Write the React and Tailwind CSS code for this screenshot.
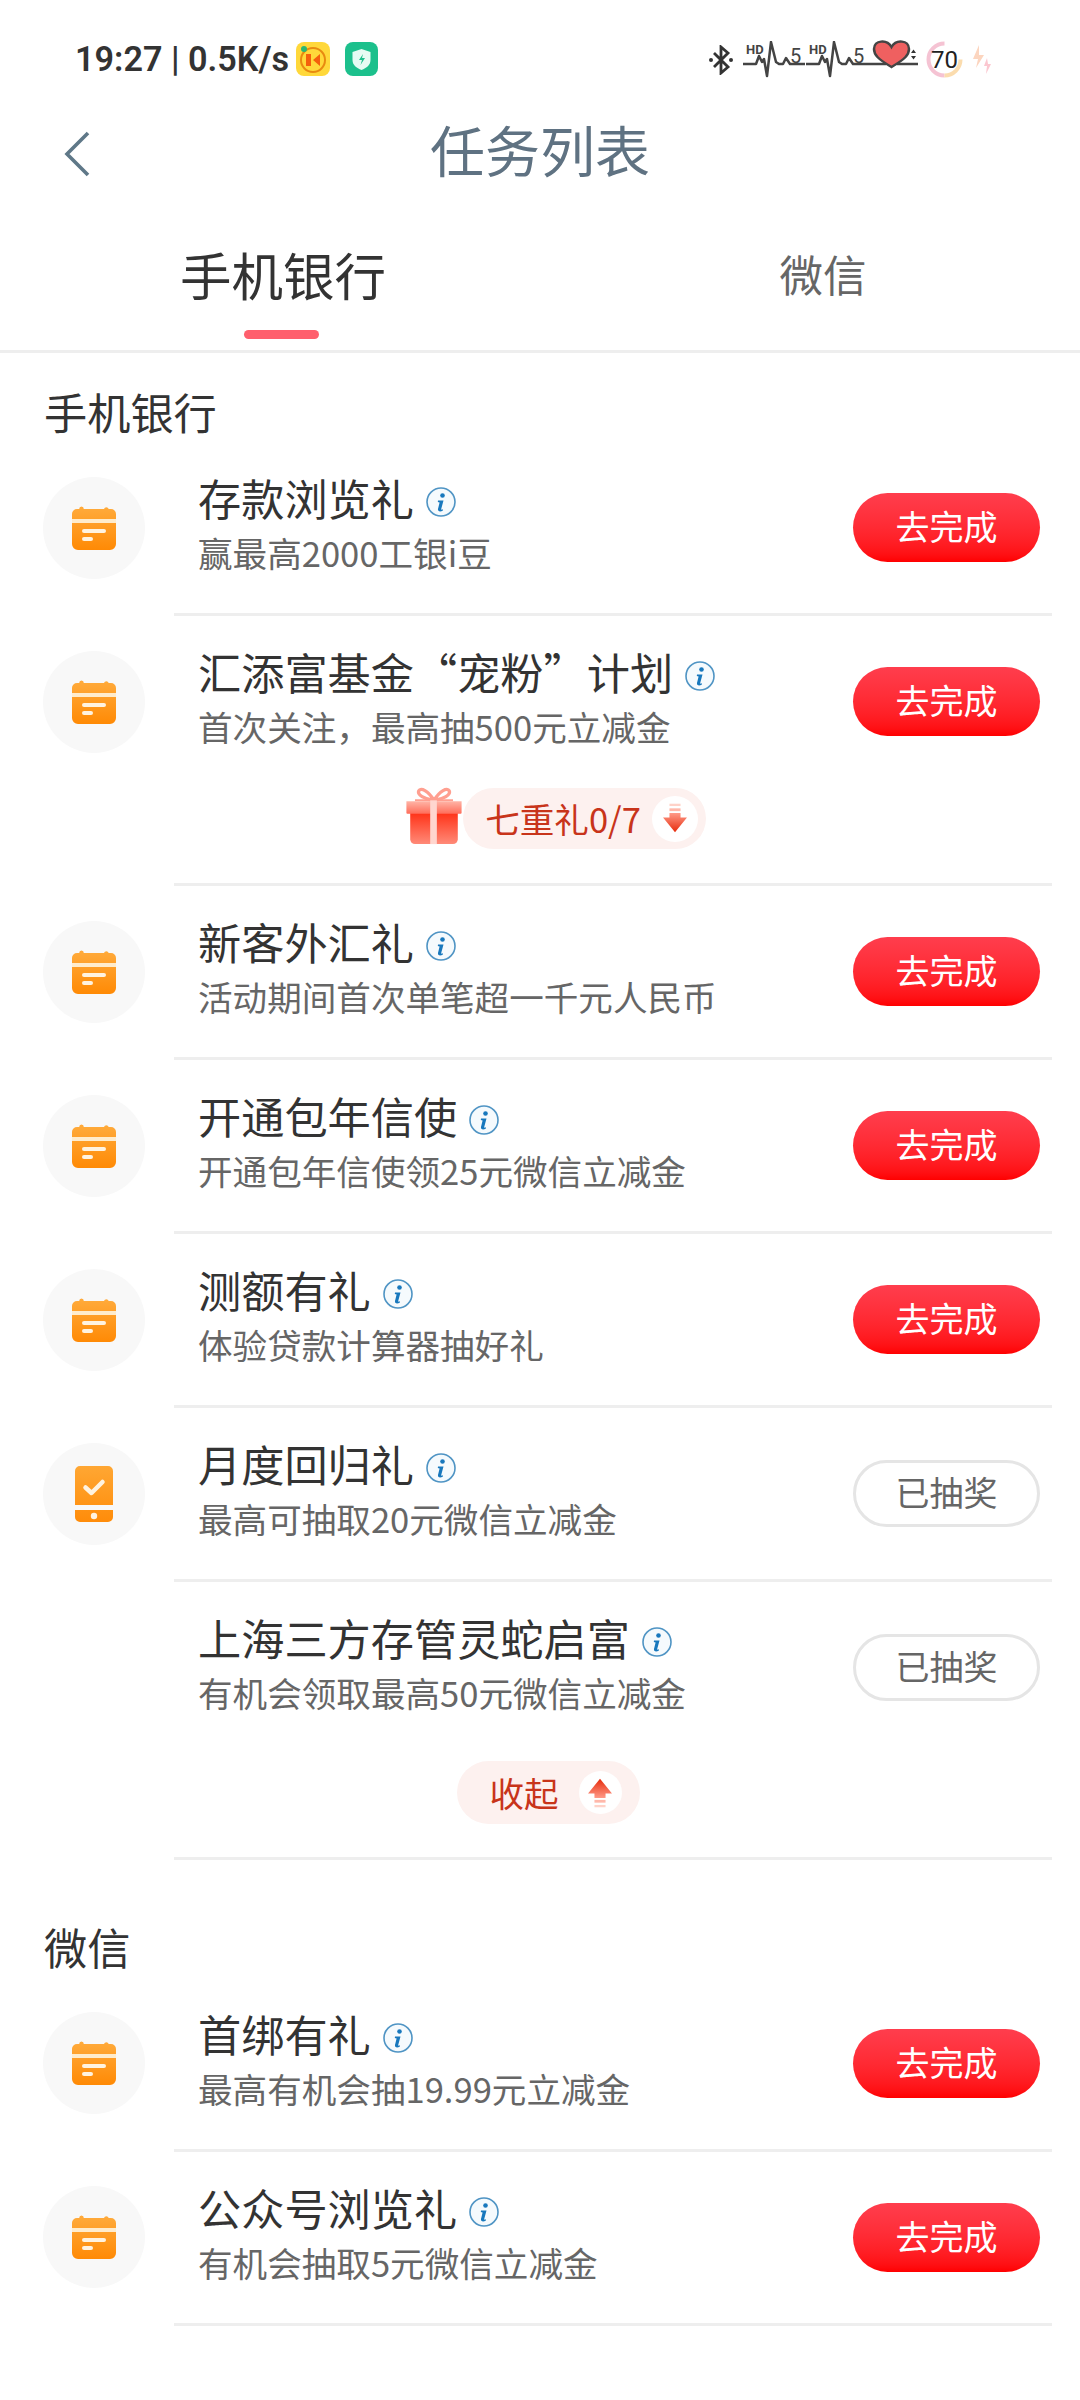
function CalIcon({ id }) {
  return (
    <svg width="46" height="46" viewBox="0 0 46 46">
      <defs>
        <linearGradient id={id} x1="0" y1="0" x2="0" y2="1">
          <stop offset="0" stopColor="#ffab3c" />
          <stop offset="1" stopColor="#ff8a05" />
        </linearGradient>
      </defs>
      <path fill={`url(#${id})`} d="M10.500 1.500a2.500 2.500 0 0 1 2.300 2.500H33a2.500 2.500 0 0 1 4.700 0H40a5 5 0 0 1 5 5V39a6 6 0 0 1-6 6H7a6 6 0 0 1-6-6V9a5 5 0 0 1 5-5h2.200a2.500 2.500 0 0 1 2.300-2.500z" />
      <rect x="1" y="14" width="44" height="4" fill="#ffeccc" />
      <rect x="11" y="24" width="24" height="4" rx="2" fill="#fff3e0" />
      <rect x="11" y="32" width="11" height="4" rx="2" fill="#fff3e0" />
    </svg>
  );
}
function PhoneIcon() {
  return (
    <svg width="38" height="56" viewBox="0 0 38 56">
      <defs>
        <linearGradient id="ph" x1="0" y1="0" x2="0" y2="1">
          <stop offset="0" stopColor="#ffa733" />
          <stop offset="1" stopColor="#ff8c0a" />
        </linearGradient>
      </defs>
      <path fill="url(#ph)" d="M5 0h28a5 5 0 0 1 5 5v34H0V5a5 5 0 0 1 5-5zM0 44h38v7a5 5 0 0 1-5 5H5a5 5 0 0 1-5-5z" />
      <path d="M10.500 21.500l6 5.500 11-11" fill="none" stroke="#fff3e0" strokeWidth="4.500" strokeLinecap="round" strokeLinejoin="round" />
      <circle cx="19" cy="50" r="3.200" fill="#fff3e0" />
    </svg>
  );
}
function Info() {
  return (
    <svg width="30" height="30" viewBox="0 0 30 30" className="mt-[10px] shrink-0">
      <circle cx="15" cy="15" r="14" fill="#f5fafd" stroke="#4f94c4" strokeWidth="1.600" />
      <circle cx="16.500" cy="8.500" r="2.300" fill="#1878bd" />
      <path d="M12 13.500h5.500l-2.300 8.500c-.2.800.5 1 1.800.300l-.3 1.500c-2.800 1.200-5.200.6-4.700-1.800l1.600-6.500-1.800-.5z" fill="#1878bd" />
    </svg>
  );
}
function Row({ title, sub, icon, done, children }) {
  return (
    <div className="flex flex-col">
      <div className="flex h-[171px] items-center">
        <div className={icon === "none" ? "ml-[43px] h-[102px] w-[102px] shrink-0" : "ml-[43px] flex h-[102px] w-[102px] shrink-0 items-center justify-center rounded-full bg-[#f8f8f8]"}>
          {icon === "cal" && <CalIcon id={title} />}
          {icon === "phone" && <PhoneIcon />}
        </div>
        <div className="ml-[53px] flex flex-1 flex-col pb-[8px]">
          <div className="flex h-[52px] items-center gap-[12px] text-[43.200px] leading-[52px] text-[#333333]">
            <span>{title}</span>
            <Info />
          </div>
          <div className="mt-[4.500px] text-[34.600px] leading-[48px] text-[#666666]">{sub}</div>
        </div>
        {done ? (
          <div className="mr-[40px] flex h-[67px] w-[187px] items-center justify-center rounded-full border-[3px] border-[#e5e5e5] bg-white pb-[4px] text-[34px] text-[#666666]">已抽奖</div>
        ) : (
          <div className="mr-[40px] flex h-[69px] w-[187px] items-center justify-center rounded-full bg-gradient-to-b from-[#ff3d4d] to-[#ff0000] pb-[4px] text-[34px] text-white">去完成</div>
        )}
      </div>
      {children}
      <div className="ml-[174px] mr-[28px] h-[3px] bg-[#eeeeee]" />
    </div>
  );
}
function Arrow({ up, id }) {
  return (
    <svg width="24" height="31" viewBox="0 0 26 32" style={up ? { transform: "rotate(180deg)" } : undefined}>
      <defs>
        <linearGradient id={id} x1="0" y1="0" x2="0" y2="1">
          <stop offset="0" stopColor="#ff9a88" />
          <stop offset="1" stopColor="#e62a0a" />
        </linearGradient>
      </defs>
      <rect x="7" y="0" width="12" height="2.500" fill="#ffd2c8" />
      <rect x="7" y="5" width="12" height="3" fill="#ffb8aa" />
      <path d="M7 10h12v5h7L13 31 0 15h7z" fill={`url(#${id})`} />
    </svg>
  );
}
function Gift() {
  return (
    <svg width="58" height="59" viewBox="0 0 60 62" className="-mt-[4px] shrink-0">
      <defs>
        <linearGradient id="g1" x1="0" y1="0" x2="0" y2="1">
          <stop offset="0" stopColor="#ff2f14" />
          <stop offset="1" stopColor="#ff8a78" />
        </linearGradient>
        <linearGradient id="g2" x1="0" y1="0" x2="0" y2="1">
          <stop offset="0" stopColor="#ffb4a6" />
          <stop offset="1" stopColor="#ff6d5a" />
        </linearGradient>
      </defs>
      <path d="M30 14C24 4 16 0 14 4c-2 4 6 9 16 10zM30 14C36 4 44 0 46 4c2 4-6 9-16 10z" fill="none" stroke="#ff9f90" strokeWidth="3.500" />
      <path d="M10 14h40" stroke="#ff9f90" strokeWidth="2" />
      <path d="M5 26h50v29a5 5 0 0 1-5 5H10a5 5 0 0 1-5-5z" fill="url(#g1)" />
      <path d="M1 15h58v12a1 1 0 0 1-1 1H2a1 1 0 0 1-1-1z" fill="url(#g2)" />
      <rect x="26" y="14" width="7" height="46" fill="#ffd6cf" />
    </svg>
  );
}
function Wave() {
  return (
    <svg width="62" height="38" viewBox="0 0 62 38">
      <text x="3" y="13" fontSize="13" fontWeight="700" fill="#444444" fontFamily="Roboto, sans-serif">HD</text>
      <text x="47" y="22" fontSize="20" fill="#444444" fontFamily="Roboto, sans-serif">5</text>
      <path d="M0 23H13L16 15L19 21L21 18L24 35L28 1L33 21L36 23H40L43 17L47 23H62" fill="none" stroke="#444444" strokeWidth="2.500" strokeLinejoin="round" />
    </svg>
  );
}
function StatusRight() {
  return (
    <div className="flex items-center">
      <svg width="24" height="30" viewBox="0 0 24 30" className="mr-[10px]">
        <path d="M5 8l14 14-7 6V2l7 6L5 22" fill="none" stroke="#333333" strokeWidth="2.800" />
        <circle cx="2" cy="15" r="2" fill="#333333" /><circle cx="22" cy="15" r="2" fill="#333333" />
      </svg>
      <div className="mr-[1px]"><Wave /></div>
      <Wave />
      <svg width="50" height="38" viewBox="0 0 50 38" className="overflow-visible">
        <path d="M0 23H18M29 23H50" stroke="#444444" strokeWidth="2.500" />
        <path d="M23.500 26C10 18 6 14 6 8C6-1 19-2 23.500 6C28-2 41-1 41 8C41 14 37 18 23.500 26z" fill="#ef6060" stroke="#444444" strokeWidth="2.500" />
        <path d="M43 12l2.500-3.500 2.500 3.500zM43 15l2.500 3.500 2.500-3.500z" fill="#333333" />
      </svg>
      <div className="relative ml-[8px] flex h-[37px] w-[37px] items-center justify-center">
        <svg width="37" height="37" viewBox="0 0 37 37" className="absolute inset-0">
          <path d="M18.500 2.500A16 16 0 0 0 18.500 34.500" fill="none" stroke="#f5c3d3" strokeWidth="4" />
          <path d="M18.500 34.500A16 16 0 0 0 34.500 18.500" fill="none" stroke="#fbdcae" strokeWidth="4" />
        </svg>
        <span className="relative font-['Roboto'] text-[24px] leading-none text-[#222222]">70</span>
      </div>
      <svg width="20" height="32" viewBox="0 0 20 32" className="ml-[9px]">
        <path d="M7 1L1 15h5l-2 9 8-13H7z" fill="#fcd5bf" />
        <path d="M15 14l-3 8h3l-1 8 5-10h-3z" fill="#fbc7d0" />
      </svg>
    </div>
  );
}
export default function App() {
  return (
    <div className="min-h-[2400px] bg-white font-['Noto_Sans_CJK_SC','Noto_Sans',sans-serif]">
      <div className="flex h-[116px] items-center justify-between pl-[75px] pr-[88px] pt-[3px]">
        <div className="flex items-center">
          <span className="font-['Roboto'] text-[34.200px] font-semibold leading-none text-[#333333]">19:27 | 0.5K/s</span>
          <svg width="34" height="34" viewBox="0 0 34 34" className="ml-[7px]">
            <rect width="34" height="34" rx="8" fill="#ffd83a" />
            <circle cx="17" cy="18" r="12" fill="none" stroke="#e88a10" strokeWidth="2" />
            <path d="M10 12h5v12h-5zM24 12l-7 6 7 6z" fill="#f4600c" />
            <circle cx="8" cy="7" r="3" fill="#2bb673" />
          </svg>
          <svg width="33" height="34" viewBox="0 0 33 34" className="ml-[15px]">
            <rect width="33" height="34" rx="8" fill="#1cc08c" />
            <path d="M16.500 7l9 3v8c0 5-4 8-9 10-5-2-9-5-9-10v-8z" fill="#e6fbf3" />
            <path d="M18 12l-4 6h3l-1.500 5 4.500-7h-3z" fill="#1cc08c" />
          </svg>
        </div>
        <StatusRight />
      </div>
      <div className="relative flex h-[72px] items-center justify-center pb-[9px]">
        <svg width="28" height="48" viewBox="0 0 28 48" className="absolute left-[63px] top-[14px]">
          <path d="M25 3L4 24l21 21" fill="none" stroke="#5f7888" strokeWidth="3.600" />
        </svg>
        <span className="text-[55px] leading-[72px] text-[#5f7282]">任务列表</span>
      </div>
      <div className="flex h-[165px] border-b-[3px] border-[#eeeeee]">
        <div className="flex w-[566px] flex-col items-center pt-[51px]">
          <span className="text-[51.500px] leading-[70px] text-[#333333]">手机银行</span>
          <div className="-ml-[3px] mt-[21px] h-[9px] w-[75px] rounded-full bg-[#ff5f6d]" />
        </div>
        <div className="flex flex-1 justify-center pt-[55px]">
          <span className="text-[43.500px] leading-[62px] text-[#666666]">微信</span>
        </div>
      </div>
      <div className="pb-[1px] pl-[44px] pt-[28px] text-[43.200px] leading-[60px] text-[#333333]">手机银行</div>
      <Row title="存款浏览礼" sub="赢最高2000工银i豆" icon="cal" />
      <Row title="汇添富基金“宠粉”计划" sub="首次关注，最高抽500元立减金" icon="cal">
        <div className="flex h-[96px] items-start justify-center pl-[31px] pt-[1px]">
          <div className="flex items-center">
            <Gift />
            <div className="flex h-[61px] items-center rounded-full bg-[#fdf1ef] pl-[22px] pr-[8px]">
              <span className="text-[34.600px] text-[#c8341a]">七重礼0/7</span>
              <div className="ml-[11px] flex h-[46px] w-[46px] items-center justify-center rounded-full bg-white"><Arrow id="a1" /></div>
            </div>
          </div>
        </div>
      </Row>
      <Row title="新客外汇礼" sub="活动期间首次单笔超一千元人民币" icon="cal" />
      <Row title="开通包年信使" sub="开通包年信使领25元微信立减金" icon="cal" />
      <Row title="测额有礼" sub="体验贷款计算器抽好礼" icon="cal" />
      <Row title="月度回归礼" sub="最高可抽取20元微信立减金" icon="phone" done />
      <Row title="上海三方存管灵蛇启富" sub="有机会领取最高50元微信立减金" icon="none" done>
        <div className="flex h-[104.400px] items-start justify-center pl-[16px] pt-[8px]">
          <div className="flex h-[63px] w-[183px] items-center justify-between rounded-full bg-[#fdf1ef] pl-[33px] pr-[18px]">
            <span className="text-[34.600px] text-[#c8341a]">收起</span>
            <div className="flex h-[43px] w-[43px] items-center justify-center rounded-full bg-white"><Arrow up id="a2" /></div>
          </div>
        </div>
      </Row>
      <div className="pl-[44px] pb-[1.500px] pt-[56px] text-[43.200px] leading-[60px] text-[#333333]">微信</div>
      <Row title="首绑有礼" sub="最高有机会抽19.99元立减金" icon="cal" />
      <Row title="公众号浏览礼" sub="有机会抽取5元微信立减金" icon="cal" />
    </div>
  );
}
